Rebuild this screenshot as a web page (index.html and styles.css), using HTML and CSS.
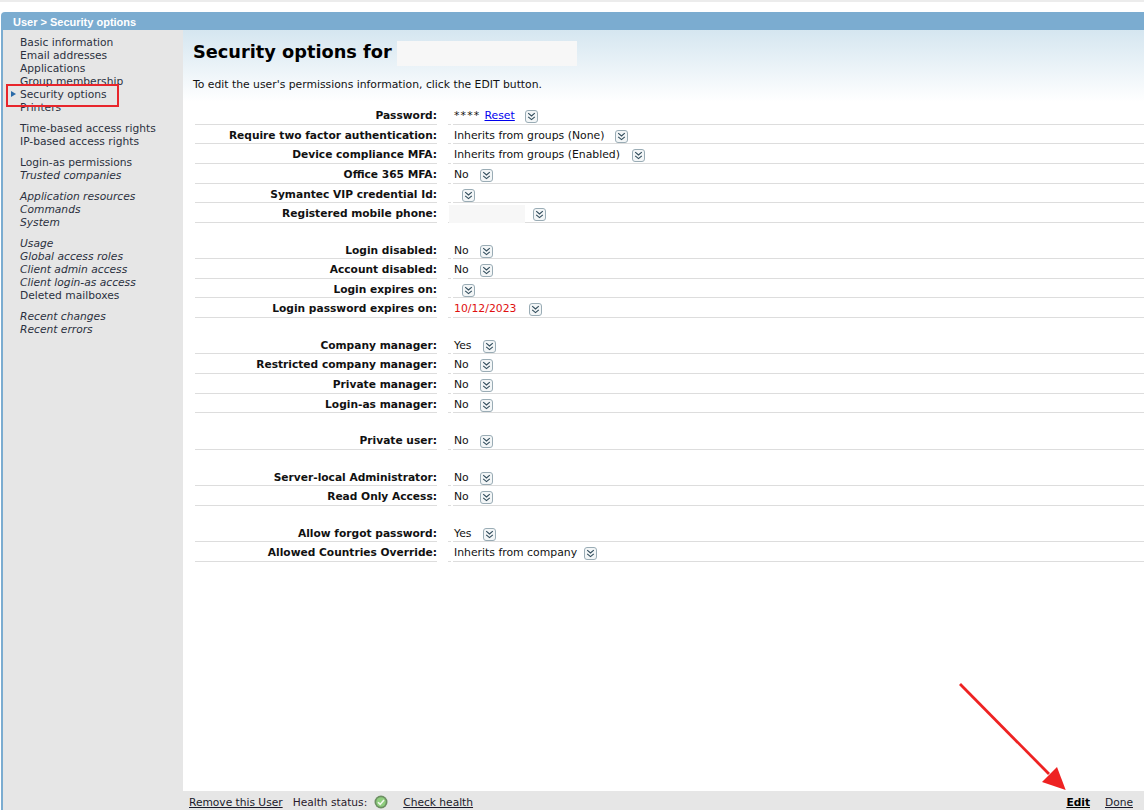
FILE: index.html
```html
<!DOCTYPE html>
<html lang="en">
<head>
<meta charset="utf-8">
<title>Security options</title>
<link rel="stylesheet" href="styles.css">
</head>
<body>
<div class="topline"></div>
<div class="window">
  <div class="titlebar">User &gt; Security options</div>
  <div class="columns">
    <nav class="sidebar">
      <ul class="navgroup">
        <li>Basic information</li>
        <li>Email addresses</li>
        <li>Applications</li>
        <li>Group membership</li>
        <li class="current">Security options</li>
        <li>Printers</li>
      </ul>
      <ul class="navgroup">
        <li>Time-based access rights</li>
        <li>IP-based access rights</li>
      </ul>
      <ul class="navgroup">
        <li>Login-as permissions</li>
        <li class="it">Trusted companies</li>
      </ul>
      <ul class="navgroup">
        <li class="it">Application resources</li>
        <li class="it">Commands</li>
        <li class="it">System</li>
      </ul>
      <ul class="navgroup">
        <li class="it">Usage</li>
        <li class="it">Global access roles</li>
        <li class="it">Client admin access</li>
        <li class="it">Client login-as access</li>
        <li>Deleted mailboxes</li>
      </ul>
      <ul class="navgroup">
        <li class="it">Recent changes</li>
        <li class="it">Recent errors</li>
      </ul>
    </nav>
    <div class="main">
      <div class="content">
        <div class="heading">
          <h1>Security options for</h1>
          <span class="redact-title"></span>
        </div>
        <p class="intro">To edit the user's permissions information, click the EDIT button.</p>
        <div class="rows">
          <div class="row"><div class="lbl">Password:</div><div class="sp"></div><div class="val"><span class="stars">****</span><a href="#" class="link">Reset</a><svg class="dd gap10" viewBox="0 0 13 13"><use href="#dd"/></svg></div></div>
          <div class="row"><div class="lbl">Require two factor authentication:</div><div class="sp"></div><div class="val">Inherits from groups (None)<svg class="dd gap11" viewBox="0 0 13 13"><use href="#dd"/></svg></div></div>
          <div class="row"><div class="lbl">Device compliance MFA:</div><div class="sp"></div><div class="val">Inherits from groups (Enabled)<svg class="dd gap12" viewBox="0 0 13 13"><use href="#dd"/></svg></div></div>
          <div class="row"><div class="lbl">Office 365 MFA:</div><div class="sp"></div><div class="val">No<svg class="dd gap11" viewBox="0 0 13 13"><use href="#dd"/></svg></div></div>
          <div class="row"><div class="lbl">Symantec VIP credential Id:</div><div class="sp"></div><div class="val"><svg class="dd gap8" viewBox="0 0 13 13"><use href="#dd"/></svg></div></div>
          <div class="row"><div class="lbl">Registered mobile phone:</div><div class="sp"></div><div class="val phone"><span class="redact-phone"></span><svg class="dd gap8" viewBox="0 0 13 13"><use href="#dd"/></svg></div></div>
          <div class="spacer"></div>
          <div class="row"><div class="lbl">Login disabled:</div><div class="sp"></div><div class="val">No<svg class="dd gap11" viewBox="0 0 13 13"><use href="#dd"/></svg></div></div>
          <div class="row"><div class="lbl">Account disabled:</div><div class="sp"></div><div class="val">No<svg class="dd gap11" viewBox="0 0 13 13"><use href="#dd"/></svg></div></div>
          <div class="row"><div class="lbl">Login expires on:</div><div class="sp"></div><div class="val"><svg class="dd gap8" viewBox="0 0 13 13"><use href="#dd"/></svg></div></div>
          <div class="row"><div class="lbl">Login password expires on:</div><div class="sp"></div><div class="val"><span class="expired">10/12/2023</span><svg class="dd gap12" viewBox="0 0 13 13"><use href="#dd"/></svg></div></div>
          <div class="spacer"></div>
          <div class="row"><div class="lbl">Company manager:</div><div class="sp"></div><div class="val">Yes<svg class="dd gap11" viewBox="0 0 13 13"><use href="#dd"/></svg></div></div>
          <div class="row"><div class="lbl">Restricted company manager:</div><div class="sp"></div><div class="val">No<svg class="dd gap11" viewBox="0 0 13 13"><use href="#dd"/></svg></div></div>
          <div class="row"><div class="lbl">Private manager:</div><div class="sp"></div><div class="val">No<svg class="dd gap11" viewBox="0 0 13 13"><use href="#dd"/></svg></div></div>
          <div class="row"><div class="lbl">Login-as manager:</div><div class="sp"></div><div class="val">No<svg class="dd gap11" viewBox="0 0 13 13"><use href="#dd"/></svg></div></div>
          <div class="spacer"></div>
          <div class="row"><div class="lbl">Private user:</div><div class="sp"></div><div class="val">No<svg class="dd gap11" viewBox="0 0 13 13"><use href="#dd"/></svg></div></div>
          <div class="spacer"></div>
          <div class="row"><div class="lbl">Server-local Administrator:</div><div class="sp"></div><div class="val">No<svg class="dd gap11" viewBox="0 0 13 13"><use href="#dd"/></svg></div></div>
          <div class="row"><div class="lbl">Read Only Access:</div><div class="sp"></div><div class="val">No<svg class="dd gap11" viewBox="0 0 13 13"><use href="#dd"/></svg></div></div>
          <div class="spacer"></div>
          <div class="row"><div class="lbl">Allow forgot password:</div><div class="sp"></div><div class="val">Yes<svg class="dd gap11" viewBox="0 0 13 13"><use href="#dd"/></svg></div></div>
          <div class="row"><div class="lbl">Allowed Countries Override:</div><div class="sp"></div><div class="val">Inherits from company<svg class="dd gap7" viewBox="0 0 13 13"><use href="#dd"/></svg></div></div>
        </div>
      </div>
      <footer class="footer">
        <a href="#" class="flink">Remove this User</a>
        <span class="health">Health status:</span>
        <svg class="healthicon" viewBox="0 0 14 14"><circle cx="7" cy="7" r="6.5" fill="#6c8f62"/><circle cx="7" cy="7" r="4.8" fill="#8fce7e"/><path d="M4 7.2l2.2 2.2L10 5" fill="none" stroke="#f2f8ee" stroke-width="1.6"/></svg>
        <a href="#" class="flink check">Check health</a>
        <span class="grow"></span>
        <a href="#" class="flink edit">Edit</a>
        <a href="#" class="flink done">Done</a>
      </footer>
    </div>
  </div>
</div>
<div class="callout-box"></div>
<svg class="callout-arrow" viewBox="0 0 120 130"><path d="M1 1L90 91" stroke="#ee2222" stroke-width="2.8" fill="none"/><path d="M106.7 107L83 99L98 84Z" fill="#ee2222"/></svg>
<svg class="defs" width="0" height="0"><defs><g id="dd"><rect x="0.5" y="0.5" width="12" height="12" rx="2.5" fill="#f3f6f7" stroke="#9aacb5"/><path d="M3.2 3.2L6.5 6L9.8 3.2M3.2 6.8L6.5 9.6L9.8 6.8" fill="none" stroke="#2f4a5a" stroke-width="1.1"/></g></defs></svg>
</body>
</html>
```
FILE: styles.css
```css
* { box-sizing: border-box; }
html, body { margin: 0; height: 100%; }
body {
  position: relative;
  width: 1144px;
  height: 810px;
  overflow: hidden;
  background: #fff;
  font-family: "DejaVu Sans", Verdana, sans-serif;
  font-size: 10.85px;
  color: #111;
}
.topline { height: 2px; background: #ececec; }
.window {
  margin: 10px 0 0 1px;
  height: 798px;
  display: flex;
  flex-direction: column;
}
.titlebar {
  height: 18px;
  padding: 3px 0 0 12px;
  background: #7bacd0;
  border-radius: 4px 0 0 0;
  color: #fff;
  font-family: "Liberation Sans", Arial, sans-serif;
  font-weight: bold;
  font-size: 11px;
  line-height: 14px;
}
.columns {
  flex: 1;
  display: flex;
  min-height: 0;
  border-left: 2px solid #7bacd0;
}
.sidebar {
  width: 180px;
  flex: none;
  background: #e6e6e6;
  padding: 6px 0 0 17px;
  color: #2b3140;
  font-size: 10.7px;
}
.navgroup { list-style: none; margin: 0 0 8px; padding: 0; }
.navgroup li { line-height: 13px; height: 13px; white-space: nowrap; }
.navgroup .it { font-style: italic; }
.navgroup .current { position: relative; }
.navgroup .current::before {
  content: "";
  position: absolute;
  left: -9px;
  top: 3px;
  border-left: 5px solid #2a6aa8;
  border-top: 3.5px solid transparent;
  border-bottom: 3.5px solid transparent;
}
.main {
  flex: 1;
  min-width: 0;
  display: flex;
  flex-direction: column;
}
.content {
  flex: 1;
  padding: 11px 0 0 10px;
  background: linear-gradient(#d5e6f0 0, #fff 72px);
}
.heading { display: flex; align-items: flex-start; height: 25px; }
h1 {
  margin: 0;
  font-size: 17.75px;
  line-height: 23px;
  font-weight: bold;
  color: #000;
}
.redact-title { width: 180px; height: 25px; margin-left: 5px; background: #f7f7f7; }
.intro { margin: 12px 0 0; line-height: 14px; font-size: 10.8px; color: #111; }
.rows { margin: 13.4px 0 0 2px; }
.row { display: flex; height: 19.55px; }
.spacer { height: 17px; }
.lbl {
  width: 242px;
  flex: none;
  text-align: right;
  font-weight: bold;
  font-size: 10.65px;
  line-height: 21px;
  border-bottom: 1px solid #ddd;
}
.sp { width: 3px; margin-left: 11px; flex: none; border-bottom: 1px solid #ddd; }
.val {
  flex: 1;
  margin-left: 2px;
  padding: 2px 0 0 1px;
  display: flex;
  align-items: flex-start;
  line-height: 17px;
  white-space: pre;
  border-bottom: 1px solid #ddd;
}
.val.phone { padding-left: 0; margin-left: 0; }
.stars { letter-spacing: 1.2px; }
.link { color: #0000ee; margin-left: 4px; }
.expired { color: #e01010; }
.dd { width: 13px; height: 13px; flex: none; margin-top: 3px; }
.gap7 { margin-left: 7px; }
.gap8 { margin-left: 8px; }
.gap10 { margin-left: 10px; }
.gap11 { margin-left: 11px; }
.gap12 { margin-left: 12px; }
.redact-phone { width: 76px; height: 18px; margin-left: -2px; background: #f7f7f7; }
.footer {
  height: 19px;
  flex: none;
  background: #e6e6e6;
  display: flex;
  align-items: flex-start;
  padding: 5px 11px 0 6px;
  line-height: 14px;
  font-size: 10.65px;
}
.flink { color: #1a1a2a; text-decoration: underline; }
.health { margin-left: 10px; color: #2a1a2a; }
.healthicon { width: 14px; height: 14px; margin: -1px 0 0 7px; }
.check { margin-left: 15px; }
.grow { flex: 1; }
.edit { font-weight: bold; color: #000; }
.done { margin-left: 15px; }
.callout-box {
  position: absolute;
  left: 6px;
  top: 84px;
  width: 113px;
  height: 23px;
  border: 2.5px solid #e8262c;
}
.callout-arrow {
  position: absolute;
  left: 959px;
  top: 683px;
  width: 120px;
  height: 130px;
}
.defs { position: absolute; }
```
